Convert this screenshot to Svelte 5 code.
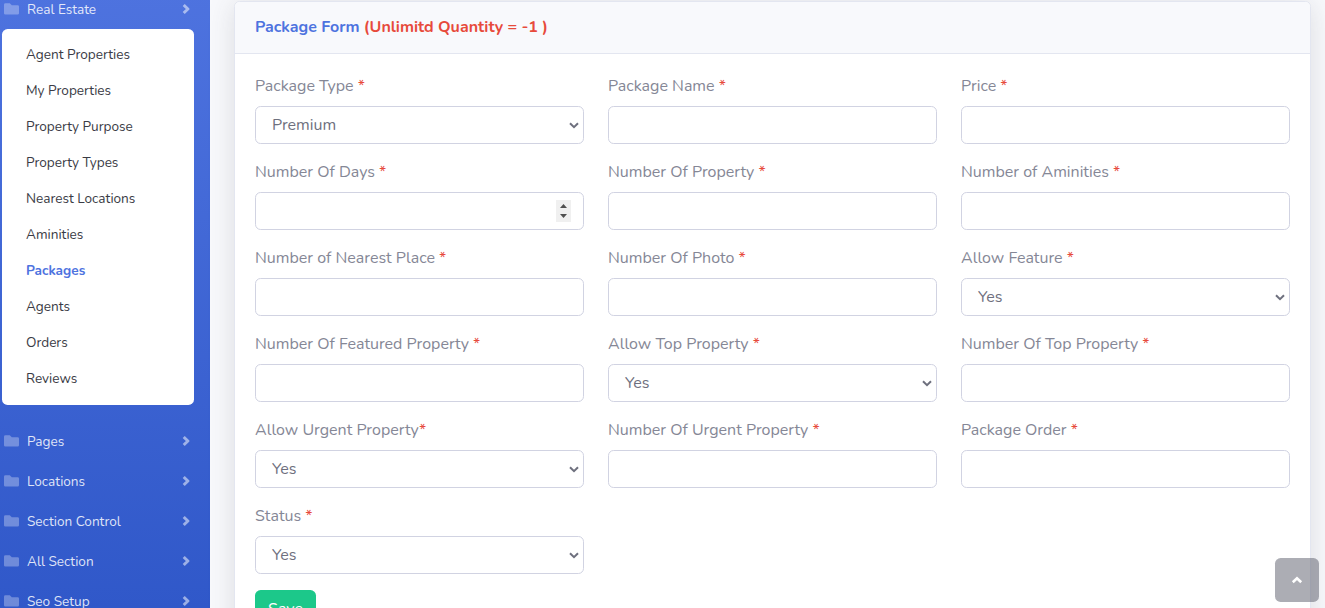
<script>
  const properties = [
    'Agent Properties', 'My Properties', 'Property Purpose', 'Property Types', 'Nearest Locations',
    'Aminities', 'Packages', 'Agents', 'Orders', 'Reviews'
  ];
  const sections = ['Pages', 'Locations', 'Section Control', 'All Section', 'Seo Setup'];
  const fields = [
    { label: 'Package Type ', value: 'Premium' },
    { label: 'Package Name ' },
    { label: 'Price ' },
    { label: 'Number Of Days ', stepper: true },
    { label: 'Number Of Property ' },
    { label: 'Number of Aminities ' },
    { label: 'Number of Nearest Place ' },
    { label: 'Number Of Photo ' },
    { label: 'Allow Feature ', value: 'Yes' },
    { label: 'Number Of Featured Property ' },
    { label: 'Allow Top Property ', value: 'Yes' },
    { label: 'Number Of Top Property ' },
    { label: 'Allow Urgent Property', value: 'Yes' },
    { label: 'Number Of Urgent Property ' },
    { label: 'Package Order ' },
    { label: 'Status ', value: 'Yes' }
  ];
</script>

{#snippet navItem(name)}
  <a class="nav-link" href="#top">
    <svg class="folder" viewBox="0 0 15 12"><path d="M1.4 .3H5.8L7.8 2.2H13.6Q15 2.2 15 3.6V10.2Q15 11.6 13.6 11.6H1.4Q0 11.6 0 10.2V1.7Q0 .3 1.4 .3Z" /></svg>
    <span>{name}</span>
    <svg class="angle" viewBox="0 0 8 12"><path d="M1.7 2L5.9 6L1.7 10" /></svg>
  </a>
{/snippet}

<div class="wrapper">
  <nav class="sidebar">
    {@render navItem('Real Estate')}
    <div class="submenu">
      {#each properties as p}
        <a class="sub-link" class:active={p === 'Packages'} href="#top">{p}</a>
      {/each}
    </div>
    {#each sections as s}
      {@render navItem(s)}
    {/each}
  </nav>
  <main>
    <section class="card">
      <header>
        <h6>Package Form <span class="red">(Unlimitd Quantity = -1 )</span></h6>
      </header>
      <form>
        <div class="grid">
          {#each fields as f}
            <div class="field">
              <div class="label">{f.label}<span class="red">*</span></div>
              <div class="control">
                {#if f.value}
                  <span>{f.value}</span>
                  <svg class="caret" viewBox="0 0 10 7"><path d="M1 1.2L5 5.2L9 1.2" /></svg>
                {/if}
                {#if f.stepper}
                  <svg class="stepper" viewBox="0 0 15 22"><path class="bg" d="M0 0H15V22H0Z" /><path d="M4 8L7.5 4L11 8ZM4 14L7.5 18L11 14Z" /></svg>
                {/if}
              </div>
            </div>
          {/each}
        </div>
        <button type="button" class="save">Save</button>
      </form>
    </section>
  </main>
  <a class="to-top" href="#top" aria-label="Back to top">
    <svg viewBox="0 0 12 8"><path d="M1.8 6.2L6 2.2L10.2 6.2" /></svg>
  </a>
</div>

<style>
  :global(body) { margin: 0; background: #f8f9fc; overflow: hidden; }
  * { box-sizing: border-box; }
  a { text-decoration: none; }
  .wrapper {
    display: flex; height: 608px; overflow: hidden; position: relative;
    font: 16px/24px Nunito, Lato, sans-serif; color: #858796; background: #f8f9fc;
  }
  .sidebar {
    width: 210px; flex: none; margin-top: -11px;
    background: linear-gradient(180deg, #4e73df 0, #3058c9 619px);
  }
  .nav-link {
    height: 40px; display: flex; align-items: center; padding: 0 20px 0 4px;
    font-size: 13.6px; color: rgba(255, 255, 255, .85);
  }
  .nav-link span { flex: 1; margin-left: 8px; padding-top: 2px; }
  .folder { width: 15px; height: 12px; fill: rgba(255, 255, 255, .3); }
  .angle { width: 8px; height: 12px; fill: none; stroke: rgba(255, 255, 255, .52); stroke-width: 3; stroke-linejoin: round; }
  .submenu {
    margin: 0 16px 16px 2px; padding: 8px 0; background: #fff; border-radius: 5.6px;
  }
  .sub-link {
    display: flex; align-items: center; height: 36px; padding-left: 24px;
    font-size: 13.6px; color: #3a3b45;
  }
  .active { color: #4e73df; font-weight: 700; }
  main { flex: 1; padding: 1px 14px 0 24px; }
  .card {
    background: #fff; border: 1px solid #e3e6f0; border-radius: 5.6px; height: 680px;
    box-shadow: 0 2.4px 28px rgba(58, 59, 69, .15);
  }
  header {
    height: 52px; padding: 13px 20px; background: #f8f9fc; border-bottom: 1px solid #e3e6f0;
    border-radius: 5px 5px 0 0;
  }
  h6 { margin: 0; font-size: 16px; line-height: 24px; font-weight: 700; color: #4e73df; }
  .red { color: #e74a3b; }
  form { padding: 20px; }
  .grid { display: grid; grid-template-columns: repeat(3, 1fr); gap: 16px 24px; }
  .label { height: 24px; margin-bottom: 8px; white-space: pre; }
  .control {
    height: 38px; border: 1px solid #d1d3e2; border-radius: 5.6px; color: #6e707e;
    display: flex; align-items: center; justify-content: space-between; padding: 0 4px 0 16px;
  }
  .caret { width: 10px; height: 7px; margin-top: 1px; fill: none; stroke: #6e707e; stroke-width: 2; }
  .stepper { width: 15px; height: 22px; margin: 0 8px 0 auto; fill: #505050; }
  .stepper .bg { fill: #f0f0f0; }
  .save {
    margin-top: 16px; width: 61px; height: 38px; border: 0; border-radius: 5.6px; padding: 0;
    background: #1cc88a; color: #fff; font: inherit; display: block;
  }
  .to-top {
    position: absolute; right: 6px; bottom: 6px; width: 44px; height: 44px; border-radius: 5.6px;
    background: rgba(90, 92, 105, .5); display: flex; align-items: center; justify-content: center;
  }
  .to-top svg { width: 12px; height: 8px; fill: none; stroke: #fff; stroke-width: 2.6; }
</style>
